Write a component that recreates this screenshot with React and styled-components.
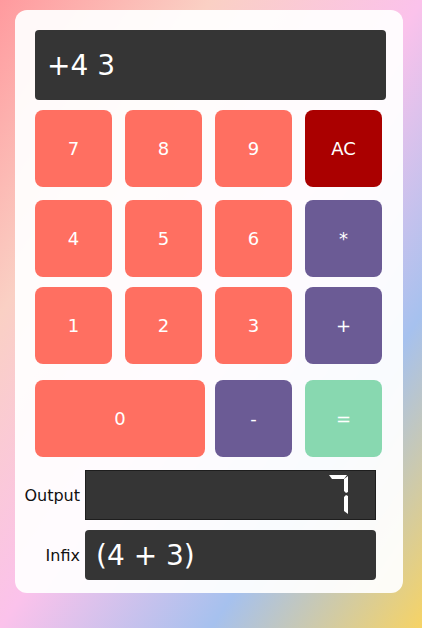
import React from 'react'
import styled, { createGlobalStyle } from 'styled-components'

const GlobalStyle = createGlobalStyle`
    html, body {
        margin: 0;
        padding: 0;
        width: 422px;
        height: 628px;
        overflow: hidden;
        font-family: "DejaVu Sans", sans-serif;
    }
`

const Page = styled.div`
    width: 422px;
    height: 628px;
    box-sizing: border-box;
    padding-top: 10px;
    padding-left: 15px;
    background: linear-gradient(to bottom right, #ff9a9e 0%, #fad0c4 25%, #fbc2eb 50%, #a6c1ee 75%, #f6d365 100%);
`

const Card = styled.div`
    width: 388px;
    height: 583px;
    box-sizing: border-box;
    padding: 20px 0 0 20px;
    border-radius: 12px;
    background: rgba(255, 255, 255, 0.93);
    display: flex;
    flex-direction: column;
`

const Screen = styled.div`
    width: 351px;
    height: 70px;
    box-sizing: border-box;
    padding-left: 12px;
    display: flex;
    align-items: center;
    background: #353535;
    border-radius: 4px;
    color: #fff;
    font-size: 28px;
`

const Row = styled.div`
    display: flex;
    gap: ${p => p.$gap || 13}px;
    margin-top: ${p => p.$top}px;
`

const Key = styled.div`
    width: ${p => p.$w || 77}px;
    height: 77px;
    border-radius: 8px;
    background: ${p => p.$bg || '#ff6f61'};
    color: #fff;
    font-size: 18px;
    display: flex;
    align-items: center;
    justify-content: center;
`

const Field = styled.div`
    display: flex;
    align-items: center;
    gap: 5px;
    margin-left: -20px;
    margin-top: ${p => p.$top}px;
`

const Label = styled.div`
    width: 65px;
    text-align: right;
    font-size: 16px;
    color: #111;
`

const OutputBox = styled.div`
    width: 291px;
    height: 50px;
    box-sizing: border-box;
    background: #353535;
    border: 1px solid #1e1e1e;
    display: flex;
    align-items: center;
    justify-content: flex-end;
    padding-right: 26px;
`

const InfixBox = styled.div`
    width: 291px;
    height: 50px;
    box-sizing: border-box;
    background: #353535;
    border-radius: 4px;
    padding-left: 11px;
    display: flex;
    align-items: center;
    color: #fff;
    font-size: 28px;
`

function SevenSeven() {
    return (
        <svg width="20" height="40" viewBox="0 0 20 40">
            <polygon points="0,0 18,0 15,4 3,4" fill="#fff" />
            <polygon points="19,1 19,17 17,18 15,16 15,4" fill="#fff" />
            <polygon points="17,20 19,21 19,39 15,36 15,22" fill="#fff" />
        </svg>
    )
}

const OPS = '#6b5b95'

function App() {
    return (
        <Page>
            <GlobalStyle />
            <Card>
                <Screen>+4 3</Screen>
                <Row $top={10}>
                    <Key>7</Key>
                    <Key>8</Key>
                    <Key>9</Key>
                    <Key $bg="#aa0000">AC</Key>
                </Row>
                <Row $top={13}>
                    <Key>4</Key>
                    <Key>5</Key>
                    <Key>6</Key>
                    <Key $bg={OPS}>*</Key>
                </Row>
                <Row $top={10}>
                    <Key>1</Key>
                    <Key>2</Key>
                    <Key>3</Key>
                    <Key $bg={OPS}>+</Key>
                </Row>
                <Row $top={16} $gap={10}>
                    <Key $w={170}>0</Key>
                    <Key $bg={OPS}>-</Key>
                    <Key $bg="#88d8b0" style={{ marginLeft: 3 }}>=</Key>
                </Row>
                <Field $top={13}>
                    <Label>Output</Label>
                    <OutputBox><SevenSeven /></OutputBox>
                </Field>
                <Field $top={10}>
                    <Label>Infix</Label>
                    <InfixBox>(4 + 3)</InfixBox>
                </Field>
            </Card>
        </Page>
    )
}

export default App
